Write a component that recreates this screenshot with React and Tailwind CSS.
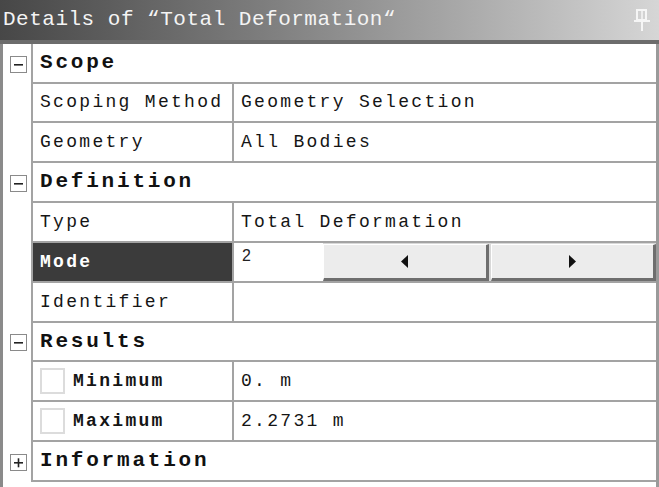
import React from 'react';

const mono = "font-['Liberation_Mono','DejaVu_Sans_Mono',monospace]";

function Expander({ open }) {
  return (
    <svg width="17" height="17" viewBox="0 0 17 17" className="block">
      <rect x="0.5" y="0.5" width="16" height="16" fill="#fff" stroke="#8a8a8a" />
      <rect x="4" y="8" width="9" height="1.6" fill="#222" />
      {!open && <rect x="7.7" y="4.3" width="1.6" height="9" fill="#222" />}
    </svg>
  );
}

function Pin() {
  return (
    <svg width="16" height="23" viewBox="0 0 16 23" className="block">
      <g stroke="#fafafa" strokeWidth="2" fill="none" opacity="0.9">
        <rect x="3" y="1" width="9" height="10" />
        <line x1="8" y1="1" x2="8" y2="11" strokeWidth="1.5" />
        <line x1="0" y1="12" x2="16" y2="12" />
        <line x1="8" y1="12" x2="8" y2="22" />
      </g>
    </svg>
  );
}

function Section({ title, open = true, h = 'h-[40px]' }) {
  return (
    <div className={`flex ${h}`}>
      <div className="w-[28px] flex items-center justify-center pl-[2px]">
        <Expander open={open} />
      </div>
      <div className={`flex-1 border-l-2 border-b-2 border-[#a3a3a3] flex items-center pl-[7px] text-[21px] font-bold tracking-[2.8px] text-[#111] ${mono}`}>
        {title}
      </div>
    </div>
  );
}

function Row({ label, value, h = 'h-[40px]', check = false, bold = false }) {
  return (
    <div className={`flex ${h}`}>
      <div className="w-[28px]" />
      <div className={`w-[201px] border-l-2 border-b-2 border-[#a3a3a3] flex items-center pl-[7px] text-[18px] tracking-[2.3px] text-[#151515] ${mono} ${bold ? 'font-bold' : ''}`}>
        {check && <div className="w-[25px] h-[26px] border-2 border-[#dcdcdc] mr-[8px] shrink-0" />}
        {label}
      </div>
      <div className={`flex-1 border-l-2 border-b-2 border-[#a3a3a3] flex items-center pl-[7px] text-[18px] tracking-[2.3px] text-[#151515] ${mono}`}>
        {value}
      </div>
    </div>
  );
}

function ModeRow() {
  return (
    <div className="flex h-[40px]">
      <div className="w-[28px]" />
      <div className={`w-[201px] border-l-2 border-b-2 border-[#a3a3a3] bg-[#3b3b3b] flex items-center pl-[7px] text-[18px] font-bold tracking-[2.3px] text-white ${mono}`}>
        Mode
      </div>
      <div className="flex-1 border-l-2 border-b-2 border-[#a3a3a3] flex">
        <div className="w-[89px] bg-white pl-[8px] pt-[3px] text-[16px] leading-[20px] text-[#222] font-['Liberation_Sans',Arial,sans-serif]">
          2
        </div>
        <div className="flex-1 flex gap-[2px] bg-[#d8d8d8] pt-[1px]">
          <button className="flex-1 flex items-center justify-center bg-[#ececec] border-t border-l border-white border-b-[3px] border-r-[3px] border-b-[#6e6e6e] border-r-[#6e6e6e]">
            <svg width="8" height="13" viewBox="0 0 8 13"><polygon points="7,0 0,6.5 7,13" fill="#111" /></svg>
          </button>
          <button className="flex-1 flex items-center justify-center bg-[#ececec] border-t border-l border-white border-b-[3px] border-r-[3px] border-b-[#6e6e6e] border-r-[#6e6e6e]">
            <svg width="8" height="13" viewBox="0 0 8 13"><polygon points="1,0 8,6.5 1,13" fill="#111" /></svg>
          </button>
        </div>
      </div>
    </div>
  );
}

export default function App() {
  return (
    <div className="w-[659px] h-[487px] flex flex-col bg-white overflow-hidden">
      {/* Title */}
      <div className="h-[40px] flex items-center justify-between pl-[3px] pr-[9px] bg-gradient-to-r from-[#474747] via-[#8c8c8c] to-[#d6d6d6]">
        <span className={`text-[21px] tracking-[0.5px] text-[#f4f4f4] whitespace-pre ${mono}`}>
          Details of “Total Deformation“
        </span>
        <Pin />
      </div>
      <div className="h-[4px] bg-[#6c6c6c]" />

      {/* Body */}
      <div className="flex-1 border-l-[3px] border-r-[3px] border-l-[#8a8a8a] border-r-[#9a9a9a]">
        <Section title="Scope" />
        <Row label="Scoping Method" value="Geometry Selection" h="h-[39px]" />
        <Row label="Geometry" value="All Bodies" />
        <Section title="Definition" />
        <Row label="Type" value="Total Deformation" />
        <ModeRow />
        <Row label="Identifier" value="" />
        <Section title="Results" h="h-[39px]" />
        <Row label="Minimum" value="0. m" check bold />
        <Row label="Maximum" value="2.2731 m" check bold />
        <Section title="Information" open={false} />
      </div>
    </div>
  );
}
